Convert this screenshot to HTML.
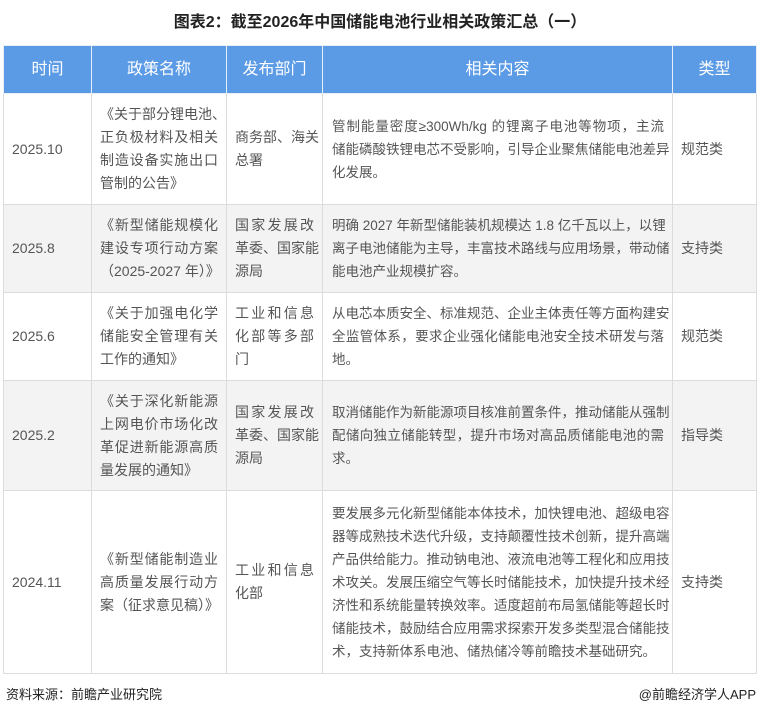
<!DOCTYPE html>
<html><head><meta charset="utf-8"><style>
body{margin:0;width:760px;height:715px;background:#fff;font-family:"Liberation Sans","Noto Sans CJK SC",sans-serif;color:#555;position:relative;overflow:hidden}
h1{position:absolute;top:8px;left:0;width:760px;text-align:center;margin:0;font-size:16px;color:#222;font-weight:bold}
table{position:absolute;left:3px;top:45px;border-collapse:collapse;width:753px;table-layout:fixed}
td,th{border:1px solid #dcdcdc;font-size:14px;line-height:23px;padding:0 8px;vertical-align:middle}
th{background:#5b9be6;color:#fff;font-weight:normal;font-size:16px;height:47px;border-color:#e8eef8}
tr.g td{background:#f3f3f3}
td span{display:block;white-space:nowrap}
td span.j{text-align:justify;text-align-last:justify}
td.t{font-size:13.5px;padding:0 8px 0 9px}
.foot{position:absolute;top:684px;font-size:13px;color:#222}
</style></head><body>
<h1>图表2：截至2026年中国储能电池行业相关政策汇总（一）</h1>
<table>
<colgroup><col style="width:88px"><col style="width:135px"><col style="width:96px"><col style="width:350px"><col style="width:84px"></colgroup>
<tr><th>时间</th><th>政策名称</th><th>发布部门</th><th>相关内容</th><th>类型</th></tr>
<tr style="height:111px"><td>2025.10</td><td><span class="j">《关于部分锂电池、</span><span class="j">正负极材料及相关</span><span class="j">制造设备实施出口</span><span>管制的公告》</span></td><td><span class="j">商务部、海关</span><span>总署</span></td><td class="t"><span class="j">管制能量密度≥300Wh/kg 的锂离子电池等物项，主流</span><span class="j">储能磷酸铁锂电芯不受影响，引导企业聚焦储能电池差异</span><span>化发展。</span></td><td>规范类</td></tr>
<tr class="g" style="height:88px"><td>2025.8</td><td><span class="j">《新型储能规模化</span><span class="j">建设专项行动方案</span><span class="j">（2025-2027 年）》</span></td><td><span class="j">国家发展改</span><span class="j">革委、国家能</span><span>源局</span></td><td class="t"><span class="j">明确 2027 年新型储能装机规模达 1.8 亿千瓦以上，以锂</span><span class="j">离子电池储能为主导，丰富技术路线与应用场景，带动储</span><span>能电池产业规模扩容。</span></td><td>支持类</td></tr>
<tr style="height:88px"><td>2025.6</td><td><span class="j">《关于加强电化学</span><span class="j">储能安全管理有关</span><span>工作的通知》</span></td><td><span class="j">工业和信息</span><span class="j">化部等多部</span><span>门</span></td><td class="t"><span class="j">从电芯本质安全、标准规范、企业主体责任等方面构建安</span><span class="j">全监管体系，要求企业强化储能电池安全技术研发与落</span><span>地。</span></td><td>规范类</td></tr>
<tr class="g" style="height:110px"><td>2025.2</td><td><span class="j">《关于深化新能源</span><span class="j">上网电价市场化改</span><span class="j">革促进新能源高质</span><span>量发展的通知》</span></td><td><span class="j">国家发展改</span><span class="j">革委、国家能</span><span>源局</span></td><td class="t"><span class="j">取消储能作为新能源项目核准前置条件，推动储能从强制</span><span class="j">配储向独立储能转型，提升市场对高品质储能电池的需</span><span>求。</span></td><td>指导类</td></tr>
<tr style="height:183px"><td>2024.11</td><td><span class="j">《新型储能制造业</span><span class="j">高质量发展行动方</span><span>案（征求意见稿）》</span></td><td><span class="j">工业和信息</span><span>化部</span></td><td class="t"><span class="j">要发展多元化新型储能本体技术，加快锂电池、超级电容</span><span class="j">器等成熟技术迭代升级，支持颠覆性技术创新，提升高端</span><span class="j">产品供给能力。推动钠电池、液流电池等工程化和应用技</span><span class="j">术攻关。发展压缩空气等长时储能技术，加快提升技术经</span><span class="j">济性和系统能量转换效率。适度超前布局氢储能等超长时</span><span class="j">储能技术，鼓励结合应用需求探索开发多类型混合储能技</span><span>术，支持新体系电池、储热储冷等前瞻技术基础研究。</span></td><td>支持类</td></tr>
</table>
<div class="foot" style="left:6px">资料来源：前瞻产业研究院</div>
<div class="foot" style="right:4px">@前瞻经济学人APP</div>
</body></html>
